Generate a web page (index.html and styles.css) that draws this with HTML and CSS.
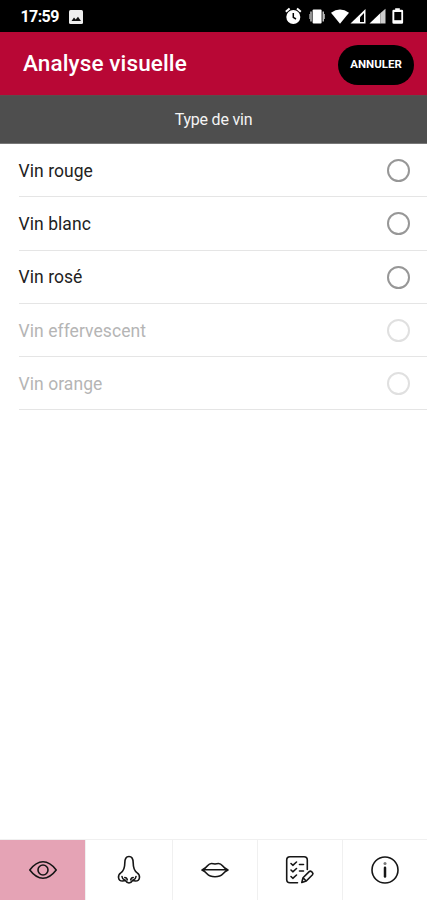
FILE: index.html
```html
<!DOCTYPE html>
<html lang="fr">
<head>
<meta charset="utf-8">
<title>Analyse visuelle</title>
<link rel="stylesheet" href="styles.css">
</head>
<body>
<div class="status">
  <span class="time">17:59</span>
  <svg class="picture" width="14" height="14" viewBox="0 0 14 14"><rect width="14" height="14" rx="1.5" fill="#eee"/><path d="M2.5 11 5 7.5l1.700 2L9 6.700l3 4.300z" fill="#111"/></svg>
  <svg class="system" width="120" height="18" viewBox="285 7 120 18" fill="#fff">
    <circle cx="293.300" cy="17" r="7"/><path d="M285.800 11.700l3.800-3.300M300.800 11.700L297 8.400" stroke="#fff" stroke-width="2"/><path d="M293.300 13v4.300l2.700 1.700" fill="none" stroke="#000" stroke-width="1.500"/>
    <rect x="312.600" y="9.500" width="9" height="14" rx="1"/><path d="M311 11.500v10M323.200 11.500v10" stroke="#ddd" stroke-width="1.300"/><path d="M309.800 14v5M324.400 14v5" stroke="#aaa"/>
    <path d="M331 12.800q9-6.500 18 0L340 23.800z"/>
    <path d="M350.500 23.500 365.500 9v14.500z"/><path d="M360 17.200 364 13v9h-4z" fill="#000"/>
    <path d="M369.500 23.500 380.500 13v10.500z"/><path d="M380.500 13 385.500 8.800v14.700h-5z" fill="#ccc"/>
    <path d="M393.700 9.800h1.500V8.300h4.600v1.500h2q1.300 0 1.300 1.300v11.400q0 1.300-1.300 1.300h-8.100q-1.300 0-1.300-1.300V11.100q0-1.300 1.300-1.300z"/><rect x="394.300" y="12" width="7" height="8.200" fill="#000"/>
  </svg>
</div>
<header class="header"><h1>Analyse visuelle</h1><button class="cancel">ANNULER</button></header>
<h2 class="section">Type de vin</h2>
<ul class="list">
  <li><span>Vin rouge</span><i class="radio"></i></li>
  <li><span>Vin blanc</span><i class="radio"></i></li>
  <li><span>Vin rosé</span><i class="radio"></i></li>
  <li class="off"><span>Vin effervescent</span><i class="radio"></i></li>
  <li class="off"><span>Vin orange</span><i class="radio"></i></li>
</ul>
<nav class="tabs">
  <a class="active"><svg width="30" height="30" viewBox="0 0 30 30"><path d="M1.800 15Q8 6.800 15 6.800T28.200 15Q22 23.200 15 23.200T1.800 15z"/><circle cx="15" cy="15" r="5"/></svg></a>
  <a><svg width="30" height="30" viewBox="0 0 30 30"><path d="M10.800 8C10.800 3.500 12 1.500 15 1.500s4.200 2 4.200 6.500c0 5 1.300 8 4 9.800 3.300 2.200 3.300 8.200-1.700 8.200-1.200 0-2-.3-2.700-.8-1 1.500-2.300 2.800-3.800 2.800s-2.800-1.300-3.800-2.800c-.7.500-1.500.8-2.700.8-5 0-5-6-1.700-8.200 2.700-1.800 4-4.800 4-9.800z"/><path d="M8 21.500q.3 2.500 2.300 3.300M22 21.500q-.3 2.500-2.300 3.300M10.800 22.500q2 0 2.500 2.300M19.200 22.500q-2 0-2.500 2.300"/></svg></a>
  <a><svg width="30" height="30" viewBox="0 0 30 30"><path d="M2 15q3.500-1.500 5.500-4.200Q9.300 8.500 11.500 8.500q1.800 0 3.500.5 1.700-.5 3.500-.5 2.200 0 4 2.300Q24.500 13.500 28 15q-3 1.500-5 3.700-2.700 3-8 3t-8-3Q5 16.500 2 15zM3 14.700h24"/></svg></a>
  <a><svg width="30" height="30" viewBox="0 0 30 30"><path d="M12.500 27.800H5q-3.300 0-3.300-3.300V5Q1.700 1.700 5 1.700h14q3.300 0 3.300 3.300v9.500"/><path d="m6 8.500 1.800 1.800L11.500 7M6 15l1.800 1.800 3.700-3.300M6 21.500l1.800 1.800 3.700-3.300M14.500 9.500h4M14.500 16h4M16.800 27.500l1.200-4.700 6.200-6.200q1.200-1 2.500.2l.6.600q1.200 1.200.2 2.400l-6.200 6.200zM18 22.800l3.300 3.200"/></svg></a>
  <a><svg width="30" height="30" viewBox="0 0 30 30"><circle cx="15" cy="15" r="13"/><path d="M15 12.800v8.700" stroke-width="2.500"/><circle class="dot" cx="15" cy="8.500" r="1.500"/></svg></a>
</nav>
</body>
</html>
```
FILE: styles.css
```css
* { box-sizing: border-box; }
body { margin: 0; height: 900px; display: flex; flex-direction: column; background: #fff; font-family: Roboto, sans-serif; overflow: hidden; }
.status { height: 32px; flex: none; display: flex; align-items: center; padding: 0 22px 0 20.5px; background: #000; color: #fff; }
.time { width: 48px; font-size: 16px; font-weight: 700; letter-spacing: -.6px; }
.picture { margin-top: 1px; }
.system { margin-left: auto; }
.header { height: 63px; flex: none; display: flex; align-items: center; justify-content: space-between; padding: 0 13px 0 23px; background: #b80735; color: #fff; }
h1 { margin: -2px 0 0; font-size: 22.5px; font-weight: 500; letter-spacing: .12px; }
.cancel { width: 76px; height: 40px; margin-top: 2px; padding: 0 0 2px; border: 0; border-radius: 20px; background: #000; color: #fff; font: 700 11.5px Roboto, sans-serif; letter-spacing: 0; }
.section { height: 49px; flex: none; margin: 0; border-top: 1px solid #5c4c4c; border-bottom: 1px solid #777; background: #4e4e4e; color: #f4f4f4; font-size: 16px; font-weight: 400; line-height: 47px; text-align: center; letter-spacing: -.2px; }
.list { margin: 0; padding: 0 0 0 18.5px; list-style: none; }
.list li { height: 53.3px; display: flex; align-items: center; justify-content: space-between; padding: 1px 17px 0 0; border-bottom: 1.5px solid #e5e5e5; color: #222; font-size: 17.5px; letter-spacing: .06px; }
.radio { width: 23px; height: 23px; border: 2px solid #979797; border-radius: 50%; }
.list .off { color: #b5b5b5; }
.off .radio { border-color: #e0e0e0; }
.tabs { display: grid; grid-template-columns: 86px 86px 85px 85px 85px; height: 61px; margin-top: auto; border-top: 1px solid #f0f0f0; }
.tabs a { display: flex; align-items: center; justify-content: center; border-left: 1px solid #f0f0f0; }
.tabs .active { background: #e5a3b5; border-left: 0; border-right: 1px solid #f0f0f0; }
.tabs .active + a { border-left: 0; }
.tabs svg { fill: none; stroke: #161616; stroke-width: 1.6; stroke-linecap: round; stroke-linejoin: round; }
.tabs .dot { fill: #777; stroke: none; }
```
